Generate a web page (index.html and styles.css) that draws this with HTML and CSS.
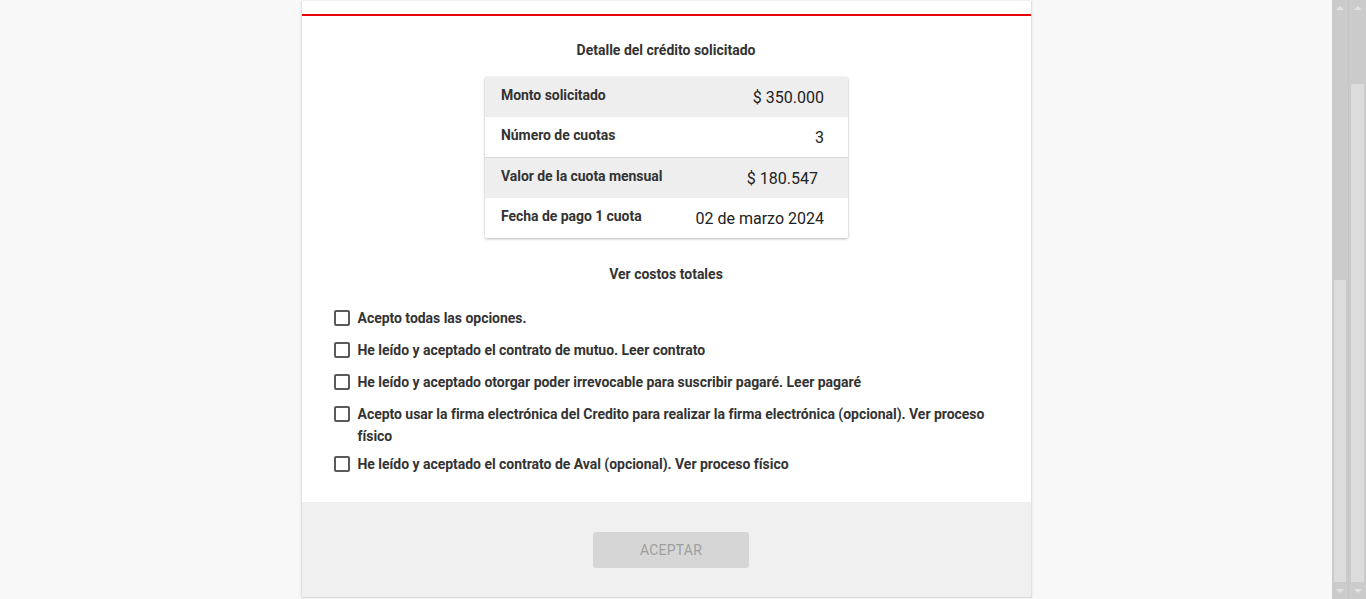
FILE: index.html
```html
<!DOCTYPE html>
<html lang="es">
<head>
<meta charset="utf-8">
<title>Detalle del crédito</title>
<link rel="stylesheet" href="styles.css">
</head>
<body>
<div class="page">
  <main class="main">
    <section class="card">
      <div class="card-top"></div>
      <div class="card-body">
        <h2 class="title">Detalle del crédito solicitado</h2>
        <div class="table">
          <div class="row shaded">
            <span class="label">Monto solicitado</span>
            <span class="value">$ 350.000</span>
          </div>
          <div class="row">
            <span class="label">Número de cuotas</span>
            <span class="value">3</span>
          </div>
          <div class="row shaded sep">
            <span class="label">Valor de la cuota mensual</span>
            <span class="value value-inset">$ 180.547</span>
          </div>
          <div class="row">
            <span class="label">Fecha de pago 1 cuota</span>
            <span class="value">02 de marzo 2024</span>
          </div>
        </div>
        <h3 class="subtitle">Ver costos totales</h3>
        <ul class="checks">
          <li class="check"><span class="box"></span><span class="text">Acepto todas las opciones.</span></li>
          <li class="check"><span class="box"></span><span class="text">He leído y aceptado el contrato de mutuo. Leer contrato</span></li>
          <li class="check"><span class="box"></span><span class="text">He leído y aceptado otorgar poder irrevocable para suscribir pagaré. Leer pagaré</span></li>
          <li class="check"><span class="box"></span><span class="text">Acepto usar la firma electrónica del Credito para realizar la firma electrónica (opcional). Ver proceso físico</span></li>
          <li class="check"><span class="box"></span><span class="text">He leído y aceptado el contrato de Aval (opcional). Ver proceso físico</span></li>
        </ul>
      </div>
      <div class="card-footer">
        <button class="btn" disabled>ACEPTAR</button>
      </div>
    </section>
  </main>
  <div class="scrollbar scroll-inner">
    <span class="arrow up"></span>
    <div class="track"><div class="thumb"></div></div>
    <span class="arrow down"></span>
  </div>
  <div class="scrollbar scroll-outer">
    <span class="arrow up"></span>
    <div class="track"><div class="thumb"></div></div>
    <span class="arrow down"></span>
  </div>
</div>
</body>
</html>
```
FILE: styles.css
```css
* { box-sizing: border-box; }
html, body { margin: 0; padding: 0; height: 100%; }
body {
  font-family: Roboto, "Liberation Sans", Arial, sans-serif;
  color: #333333;
  background: #f8f8f8;
  overflow: hidden;
}
.page {
  display: flex;
  height: 599px;
}
.main {
  flex: 1;
  display: flex;
  justify-content: center;
  align-items: flex-end;
  background: #f8f8f8;
}
.card {
  width: 731px;
  background: #ffffff;
  border-left: 1px solid #e2e2e2;
  border-right: 1px solid #e2e2e2;
  border-bottom: 1px solid #dcdcdc;
  box-shadow: 0 0 3px rgba(0,0,0,0.08);
  margin-bottom: 1px;
}
.card-top {
  height: 15px;
  border-bottom: 2px solid #e60000;
}
.card-body {
  padding: 24px 32px 16px 32px;
  display: flex;
  flex-direction: column;
  align-items: center;
}
.title, .subtitle {
  margin: 0;
  font-size: 14px;
  line-height: 20px;
  font-weight: 700;
  color: #333333;
  text-align: center;
}
.table {
  margin-top: 17px;
  width: 363px;
  margin-left: 1px;
  border-radius: 2px;
  box-shadow: 0 1px 3px rgba(0,0,0,0.28), 0 0 1px rgba(0,0,0,0.12);
  overflow: hidden;
}
.row {
  height: 40px;
  display: flex;
  justify-content: space-between;
  align-items: center;
  padding: 0 24px 0 16px;
  background: #ffffff;
}
.row.shaded { background: #eeeeee; }
.row.sep { border-top: 1px solid #d8d8d8; height: 41px; }
.label {
  font-size: 14px;
  font-weight: 700;
  color: #333333;
  letter-spacing: -0.05px;
  position: relative;
  top: -2px;
}
.value {
  font-size: 16px;
  color: #222222;
}
.value-inset { margin-right: 6px; }
.subtitle { margin-top: 26px; }
.checks {
  list-style: none;
  margin: 24px 0 0 0;
  padding: 0;
  align-self: stretch;
}
.check {
  display: flex;
  align-items: flex-start;
  gap: 8px;
  min-height: 32px;
  padding-bottom: 7px;
}
.box {
  flex: none;
  width: 16px;
  height: 16px;
  border: 2px solid #5a5a5a;
  border-radius: 2px;
  margin-top: 2px;
  background: #ffffff;
}
.text {
  font-size: 14px;
  font-weight: 700;
  line-height: 22px;
  letter-spacing: -0.03px;
  color: #333333;
  margin-top: -1px;
}
.card-footer {
  background: #f0f0f0;
  padding: 30px 0 29px;
  display: flex;
  justify-content: center;
}
.btn {
  width: 156px;
  height: 36px;
  margin-left: 10px;
  border: none;
  border-radius: 3px;
  background: #d6d6d6;
  color: #9e9e9e;
  font-family: Roboto, "Liberation Sans", Arial, sans-serif;
  font-size: 14px;
  font-weight: 400;
  letter-spacing: 0.2px;
  padding: 0;
}
.scrollbar {
  width: 17px;
  flex: none;
  background: #cbcbcb;
  display: flex;
  flex-direction: column;
  align-items: center;
}
.scroll-inner { border-right: 1px solid #c4c4c4; }
.arrow {
  width: 0;
  height: 0;
  border-left: 4px solid transparent;
  border-right: 4px solid transparent;
  flex: none;
}
.arrow.up {
  margin: 6px 0 6px;
  border-bottom: 4px solid #e2e2e2;
}
.arrow.down {
  margin: 6px 0 6px;
  border-top: 4px solid #e2e2e2;
}
.track {
  flex: 1;
  align-self: stretch;
  display: flex;
  flex-direction: column;
  justify-content: flex-end;
  padding: 0 2px 0 2px;
}
.thumb {
  background: #dcdcdc;
  margin-bottom: 1px;
}
.scroll-inner .thumb { height: 302px; }
.scroll-outer .thumb { height: 498px; }
```
